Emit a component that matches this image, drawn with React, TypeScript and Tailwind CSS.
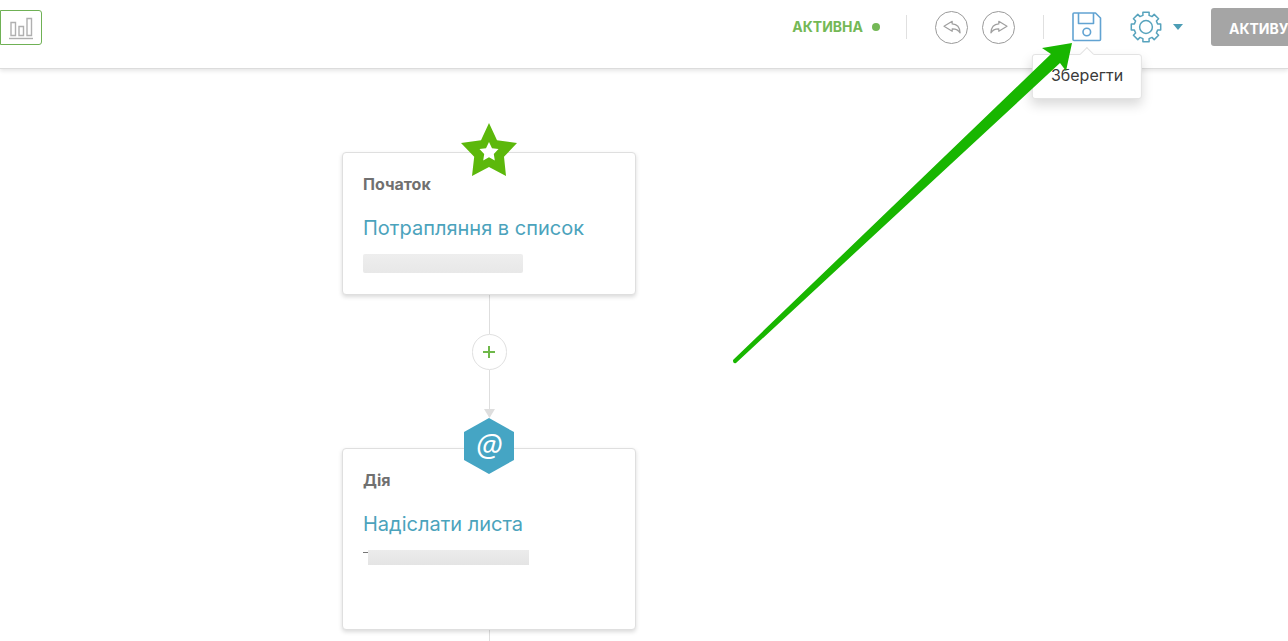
import type { ReactNode } from 'react'

function ChartIcon() {
  return (
    <svg width="26" height="24" viewBox="0 0 26 24" fill="none" stroke="#b0b0b0" strokeWidth="1.4" aria-hidden="true">
      <path d="M3 6.5h4.5v13H3zM11 10.5h4.5v9H11zM19 2.5h4.5v17H19z" />
      <path d="M1 22.5h24" />
    </svg>
  )
}

function UndoIcon() {
  return (
    <svg width="18" height="16" viewBox="0 0 18 16" fill="none" stroke="#a0a0a0" strokeWidth="1.2" strokeLinejoin="round" aria-hidden="true">
      <path d="M1 7.3 9.2 2.3v2.6c4.8.2 7.6 3.2 7.9 9-1.6-2.9-4-4.2-7.9-4.1v2.5z" />
    </svg>
  )
}

function RedoIcon() {
  return (
    <svg width="18" height="16" viewBox="0 0 18 16" fill="none" stroke="#a0a0a0" strokeWidth="1.2" strokeLinejoin="round" aria-hidden="true">
      <path d="M17 7.3 8.8 2.3v2.6c-4.8.2-7.6 3.2-7.9 9 1.6-2.9 4-4.2 7.9-4.1v2.5z" />
    </svg>
  )
}

function SaveIcon() {
  return (
    <svg width="30" height="30" viewBox="0 0 30 30" fill="none" stroke="#62a3d2" strokeWidth="1.6" strokeLinejoin="round" aria-hidden="true">
      <path d="M2 1h21.5l5 5v21.5a1 1 0 0 1-1 1H2a1 1 0 0 1-1-1V2a1 1 0 0 1 1-1z" />
      <path d="M6.5 1v10.5h15V1" />
      <circle cx="14.8" cy="20" r="3.8" />
    </svg>
  )
}

function GearIcon() {
  return (
    <svg width="32" height="32" viewBox="0 0 32 32" fill="none" stroke="#57a3bd" strokeWidth="1.5" strokeLinejoin="round" aria-hidden="true">
      <path d="M12.9 1.3h6.2v3.1L22 5.6l2.2-2.2 4.4 4.4-2.2 2.2 1.2 2.9h3.1v6.2h-3.1L26.4 22l2.2 2.2-4.4 4.4-2.2-2.2-2.9 1.2v3.1h-6.2v-3.1L10 26.4l-2.2 2.2-4.4-4.4L5.6 22l-1.2-2.9H1.3v-6.2h3.1L5.6 10 3.4 7.8l4.4-4.4L10 5.6l2.9-1.2z" />
      <circle cx="16" cy="16" r="6.4" />
    </svg>
  )
}

function StarBadge() {
  return (
    <svg width="56" height="54" viewBox="0 0 56 54" aria-hidden="true">
      <path fill="#5cb80b" d="M28 0 36 17.3 56 20 43 33.7 45 53 28 44 11 53 13.2 33.7 0 20 20 17.3z" />
      <path fill="#fff" d="M28 19l3 6.3 6.5.8-4.7 4.8 1 6.6-5.8-3.2-5.8 3.2 1-6.6-4.7-4.8 6.5-.8z" />
    </svg>
  )
}

function EmailBadge() {
  return (
    <div className="relative flex h-14 w-[50px] items-center justify-center">
      <svg className="absolute inset-0" width="50" height="56" viewBox="0 0 50 56" aria-hidden="true">
        <path fill="#45a5c4" d="M25 0l25 14v28L25 56 0 42V14z" />
      </svg>
      <span className="relative pb-1 font-['Open_Sans',sans-serif] text-[31px] leading-7 text-white italic">@</span>
    </div>
  )
}

interface StepCardProps {
  label: string
  title: string
  badge: ReactNode
  className: string
  children: ReactNode
}

function StepCard({ label, title, badge, className, children }: StepCardProps) {
  return (
    <section className={`relative w-full rounded border border-[#dfdfdf] bg-white px-5 pt-[19px] shadow-[0_2px_4px_rgba(0,0,0,0.15)] ${className}`}>
      <div className="absolute inset-x-0 -top-[3px] flex h-0 items-center justify-center">{badge}</div>
      <h2 className="text-base leading-6 font-bold text-[#707070]">{label}</h2>
      <a href="#" className="mt-4 block text-xl leading-8 text-[#4ba3bc]">
        {title}
      </a>
      {children}
    </section>
  )
}

function Divider() {
  return <div className="h-6 w-px bg-[#e0e0e0]" />
}

export default function App() {
  return (
    <div className="relative h-screen overflow-hidden bg-white font-[Inter,sans-serif]">
      <header className="relative flex h-[69px] items-start border-b border-[#dcdcdc] bg-white shadow-[0_2px_4px_rgba(0,0,0,0.1)]">
        <button
          type="button"
          aria-label="Статистика"
          className="mt-[10px] flex h-[35px] w-[42px] items-center justify-center rounded-r-[3px] border border-[#6fb155]"
        >
          <ChartIcon />
        </button>

        <div className="ml-auto flex h-[54px] items-center">
          <div className="flex items-center gap-[9px] text-sm font-bold text-[#74b856]">
            АКТИВНА
            <span className="h-2 w-2 rounded-full bg-[#74b856]" />
          </div>
          <div className="ml-[26px] flex items-center gap-7">
            <Divider />
            <div className="flex gap-[14px]">
              <button type="button" aria-label="Назад" className="flex h-[33px] w-[33px] items-center justify-center rounded-full border border-[#9a9a9a]">
                <UndoIcon />
              </button>
              <button type="button" aria-label="Вперед" className="flex h-[33px] w-[33px] items-center justify-center rounded-full border border-[#9a9a9a]">
                <RedoIcon />
              </button>
            </div>
            <div className="flex items-center gap-7">
              <Divider />
              <div className="relative flex">
                <button type="button" aria-describedby="save-tip" aria-label="Зберегти сценарій">
                  <SaveIcon />
                </button>
                <div
                  id="save-tip"
                  role="tooltip"
                  className="absolute top-[42px] left-1/2 -translate-x-1/2 rounded-[3px] border border-[#e3e3e3] bg-white px-[18px] pt-2 pb-[11px] text-base leading-6 text-[#3a3a3a] shadow-[0_6px_12px_rgba(0,0,0,0.15)]"
                >
                  <span className="absolute -top-[6px] left-1/2 h-[10px] w-[10px] -translate-x-1/2 rotate-45 border-t border-l border-[#e3e3e3] bg-white" />
                  Зберегти
                </div>
              </div>
              <button type="button" aria-label="Налаштування" className="flex items-center gap-[11px]">
                <GearIcon />
                <svg width="10" height="6" viewBox="0 0 10 6" fill="#4c9db5" aria-hidden="true">
                  <path d="M0 0h10L5 6z" />
                </svg>
              </button>
            </div>
          </div>
          <button
            type="button"
            className="ml-7 h-[38px] w-[77px] overflow-hidden rounded-l-[3px] bg-[#a5a5a5] pt-[3px] pl-[18px] text-left text-sm font-bold whitespace-nowrap text-white"
          >
            АКТИВУ
          </button>
        </div>
      </header>

      <main className="mt-[83px] ml-[342px] flex w-[294px] flex-col items-center">
        <StepCard label="Початок" title="Потрапляння в список" badge={<StarBadge />} className="h-[143px]">
          <div className="mt-[10px] h-[19px] w-40 rounded-xs bg-linear-to-b from-[#eeeeee] to-[#e8e8e8]" />
        </StepCard>

        <div className="h-[39px] w-px bg-[#dedede]" />
        <button
          type="button"
          aria-label="Додати крок"
          className="flex h-9 w-[35px] items-center justify-center rounded-full border border-[#e0e0e0] bg-white"
        >
          <svg width="12" height="12" viewBox="0 0 12 12" stroke="#6fb84a" strokeWidth="2" aria-hidden="true">
            <path d="M6 0v12M0 6h12" />
          </svg>
        </button>
        <div className="h-[39px] w-px bg-[#dedede]" />
        <svg width="11" height="9" viewBox="0 0 11 9" fill="#dedede" aria-hidden="true">
          <path d="M0 0h11L5.5 9z" />
        </svg>

        <StepCard label="Дія" title="Надіслати листа" badge={<EmailBadge />} className="mt-[30px] h-[182px]">
          <div className="mt-[10px] flex items-start">
            <span className="mt-[2px] h-px w-[5px] bg-[#777]" />
            <span className="h-[15px] w-[161px] bg-linear-to-b from-[#ececec] to-[#e4e4e4]" />
          </div>
        </StepCard>
        <div className="h-[39px] w-px bg-[#dedede]" />
      </main>

      {/* Pointer to the save button */}
      <svg className="pointer-events-none absolute top-0 right-0" width="568" height="380" viewBox="720 0 568 380" aria-hidden="true">
        <path fill="#18b600" d="M1072 43 1066 71 1060 63 736 363Q733 364 733 360L1051 54 1042 48z" />
      </svg>
    </div>
  )
}
